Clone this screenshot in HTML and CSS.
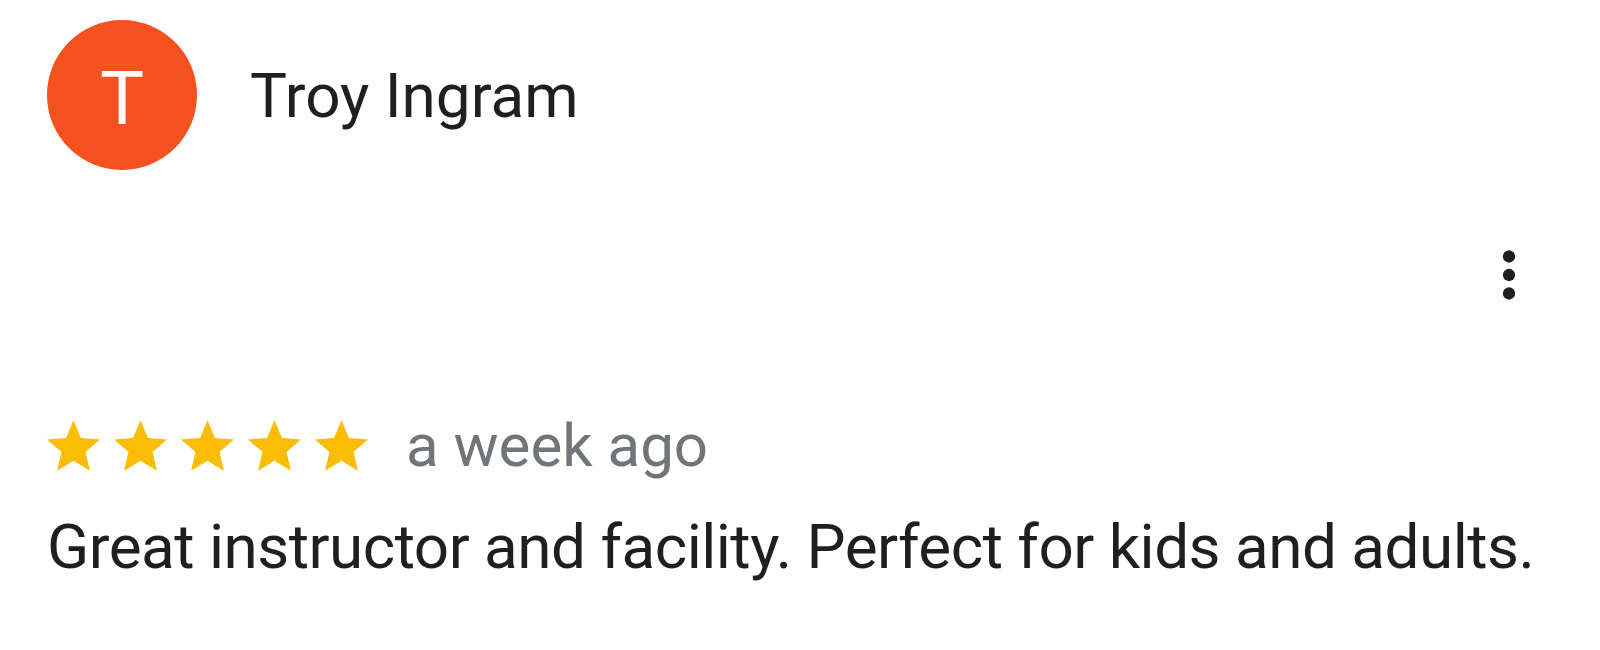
FILE: index.html
```html
<!DOCTYPE html>
<html>
<head>
<meta charset="utf-8">
<link rel="stylesheet" href="styles.css">
</head>
<body>
<div class="review">
  <div class="header">
    <div class="avatar"><span class="initial">T</span></div>
    <div class="name">Troy Ingram</div>
  </div>
  <div class="menu-row">
    <svg class="more" viewBox="0 0 24 24"><circle cx="12" cy="6" r="2"/><circle cx="12" cy="12" r="2"/><circle cx="12" cy="18" r="2"/></svg>
  </div>
  <div class="rating">
    <div class="stars">
      <svg class="star" viewBox="2 2 20 19"><path d="M12 17.27L18.18 21l-1.64-7.03L22 9.24l-7.19-.61L12 2 9.19 8.63 2 9.24l5.46 4.73L5.82 21z"/></svg>
      <svg class="star" viewBox="2 2 20 19"><path d="M12 17.27L18.18 21l-1.64-7.03L22 9.24l-7.19-.61L12 2 9.19 8.63 2 9.24l5.46 4.73L5.82 21z"/></svg>
      <svg class="star" viewBox="2 2 20 19"><path d="M12 17.27L18.18 21l-1.64-7.03L22 9.24l-7.19-.61L12 2 9.19 8.63 2 9.24l5.46 4.73L5.82 21z"/></svg>
      <svg class="star" viewBox="2 2 20 19"><path d="M12 17.27L18.18 21l-1.64-7.03L22 9.24l-7.19-.61L12 2 9.19 8.63 2 9.24l5.46 4.73L5.82 21z"/></svg>
      <svg class="star" viewBox="2 2 20 19"><path d="M12 17.27L18.18 21l-1.64-7.03L22 9.24l-7.19-.61L12 2 9.19 8.63 2 9.24l5.46 4.73L5.82 21z"/></svg>
    </div>
    <span class="date">a week ago</span>
  </div>
  <p class="text">Great instructor and facility. Perfect for kids and adults.</p>
</div>
</body>
</html>
```
FILE: styles.css
```css
html, body {
  margin: 0;
  padding: 0;
  background: #ffffff;
}
body {
  font-family: Roboto, "Liberation Sans", Arial, sans-serif;
  color: #1f1f1f;
}
.review {
  padding: 20px 54px 0 47px;
}
.header {
  display: flex;
  align-items: center;
}
.avatar {
  width: 150px;
  height: 150px;
  border-radius: 50%;
  background: #f4511e;
  color: #ffffff;
  font-size: 74px;
  display: flex;
  align-items: center;
  justify-content: center;
}
.initial {
  padding-top: 6px;
}
.name {
  margin-left: 53px;
  font-size: 62px;
  color: #1f1f1f;
}
.menu-row {
  display: flex;
  justify-content: flex-end;
  margin-top: 68px;
}
.more {
  width: 74px;
  height: 74px;
  fill: #1f1f1f;
}
.rating {
  display: flex;
  align-items: center;
  margin-top: 98px;
}
.stars {
  display: flex;
  gap: 14px;
}
.star {
  width: 53px;
  height: 51px;
  fill: #fbbc04;
}
.date {
  margin-left: 38px;
  font-size: 60px;
  color: #70757a;
}
.text {
  margin: 29px 0 0 0;
  font-size: 62px;
  letter-spacing: -0.5px;
  white-space: nowrap;
  color: #1f1f1f;
}
```
